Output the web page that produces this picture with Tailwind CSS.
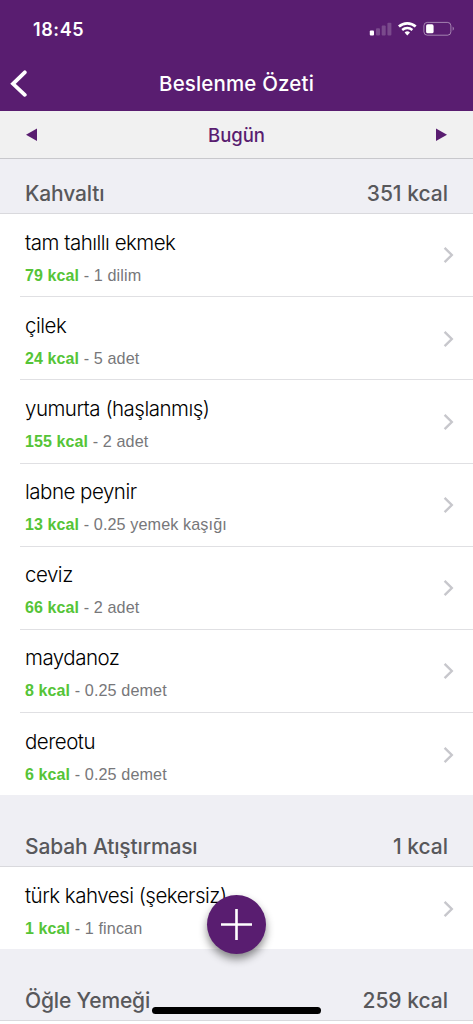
<!DOCTYPE html>
<html lang="tr">

<head>
    <meta charset="UTF-8">
    <meta name="viewport" content="width=device-width, initial-scale=1.0">
    <script src="https://cdn.jsdelivr.net/npm/@tailwindcss/browser@4"></script>
    <title>Beslenme Özeti</title>
</head>

<body class="bg-white font-['Inter',sans-serif] overflow-hidden">
    <main class="relative flex flex-col w-[473px] h-[1024px] overflow-hidden">

        <!-- Status bar + title -->
        <header class="shrink-0 h-[111px] bg-[#591d70] text-white">
            <div class="flex items-center justify-between h-[58px] pl-[33px] pr-[18px]">
                <span class="text-[18px] font-semibold tracking-[0.6px]">18:45</span>
                <svg class="w-[86px] h-[16px]" viewBox="0 0 86 16" fill="none">
                    <rect x="0.8" y="9.6" width="4.2" height="5" rx="1" fill="#fff" />
                    <rect x="7" y="7.2" width="4" height="7.4" rx="1" fill="#fff" fill-opacity=".2" />
                    <rect x="12.7" y="4.6" width="4" height="10" rx="1" fill="#fff" fill-opacity=".2" />
                    <rect x="18.4" y="1.8" width="4" height="12.8" rx="1" fill="#fff" fill-opacity=".2" />
                    <path d="M29.9 5.5a12.6 12.6 0 0 1 16.8 0" stroke="#fff" stroke-width="2.7" />
                    <path d="M33.2 9a7.7 7.7 0 0 1 10.2 0" stroke="#fff" stroke-width="2.4" />
                    <path d="M38.3 14.4l-2.7-2.8a4 4 0 0 1 5.4 0z" fill="#fff" />
                    <rect x="54.9" y="1.4" width="27" height="12.8" rx="3.4" stroke="#fff" stroke-opacity=".45" />
                    <rect x="57.1" y="3.3" width="7.5" height="9" rx="1.6" fill="#fff" />
                    <path d="M83.7 5.6c1.5.8 1.5 3.4 0 4.2z" fill="#fff" fill-opacity=".5" />
                </svg>
            </div>
            <div class="grid grid-cols-[60px_1fr_60px] items-center h-[51px]">
                <svg class="w-[18px] h-[28px] ml-[10px]" viewBox="0 0 18 28" fill="none" stroke="#fff" stroke-width="3.8" stroke-linecap="round">
                    <path d="M14.8 2.3L3 13.8l11.8 11" />
                </svg>
                <h1 class="pt-[2px] text-center text-[20.5px] font-medium tracking-[0.15px]">Beslenme Özeti</h1>
            </div>
        </header>

        <!-- Day picker -->
        <nav class="shrink-0 flex items-center justify-between h-[48px] px-[26px] bg-[#f1f1f1] border-b border-[#c8c8cc]">
            <svg class="w-[11px] h-[13px]" viewBox="0 0 11 13" fill="#591d70">
                <path d="M0 6.8L11 0.6v12.4z" />
            </svg>
            <span class="pt-[2px] text-[18.5px] font-medium text-[#591d70]">Bugün</span>
            <svg class="w-[11px] h-[13px]" viewBox="0 0 11 13" fill="#591d70">
                <path d="M11 6.8L0 0.6v12.4z" />
            </svg>
        </nav>

        <div id="meals"></div>

        <!-- Add button -->
        <button class="absolute left-[207px] top-[895px] flex items-center justify-center w-[59px] h-[59px] rounded-full bg-[#591d70] shadow-[0_5px_9px_rgba(0,0,0,0.45)]">
            <svg class="w-[31px] h-[31px]" viewBox="0 0 31 31" stroke="#fff" stroke-width="2.6">
                <path d="M15.5 0v31M0 15.5h31" />
            </svg>
        </button>

        <!-- Home indicator -->
        <div class="absolute left-[152px] top-[1007px] w-[169px] h-[7px] rounded-full bg-black"></div>
    </main>

    <script>
        const meals = [
            {
                name: 'Kahvaltı', kcal: 351, height: 55,
                items: [
                    ['tam tahıllı ekmek', 79, '1 dilim'],
                    ['çilek', 24, '5 adet'],
                    ['yumurta (haşlanmış)', 155, '2 adet'],
                    ['labne peynir', 13, '0.25 yemek kaşığı'],
                    ['ceviz', 66, '2 adet'],
                    ['maydanoz', 8, '0.25 demet'],
                    ['dereotu', 6, '0.25 demet'],
                ],
            },
            { name: 'Sabah Atıştırması', kcal: 1, height: 72, items: [['türk kahvesi (şekersiz)', 1, '1 fincan']] },
            { name: 'Öğle Yemeği', kcal: 259, height: 72, items: [] },
        ];

        const chevron = `
            <svg class="w-[12px] h-[18px]" viewBox="0 0 12 18" fill="none" stroke="#c7c7cc" stroke-width="2.4">
                <path d="M1.6 1.8L8.8 9L1.6 16.2" />
            </svg>`;

        const row = ([name, kcal, amount]) => `
            <li class="bg-white pl-[20px] h-[83.2px] last:h-[82px] group">
                <div class="flex items-start justify-between h-full pl-[5px] pt-[14px] pr-[18px] border-b border-[#e0e0e3] group-last:border-transparent">
                    <div>
                        <p class="pt-[0.5px] text-[20.5px] leading-[28px] font-light tracking-[-0.5px] text-black whitespace-nowrap">${name}</p>
                        <p class="mt-[6px] text-[16.2px] leading-[24px] tracking-[0.1px] font-['Liberation_Sans',sans-serif] text-[#77777a]"><span class="text-[16px] font-bold text-[#55c437]">${kcal} kcal</span> - ${amount}</p>
                    </div>
                    <div class="pt-[18.4px]">${chevron}</div>
                </div>
            </li>`;

        document.getElementById('meals').innerHTML = meals.map(meal => `
            <section>
                <div class="flex items-end justify-between px-[25px] pb-[4px] border-b border-[#d9d9dd] bg-[#efeff4] text-[21px] leading-[30px] font-medium text-[#58585b]" style="height: ${meal.height}px">
                    <h2 class="tracking-[-0.15px]">${meal.name}</h2>
                    <span>${meal.kcal} kcal</span>
                </div>
                <ul>${meal.items.map(row).join('')}</ul>
            </section>`).join('');
    </script>
</body>

</html>
